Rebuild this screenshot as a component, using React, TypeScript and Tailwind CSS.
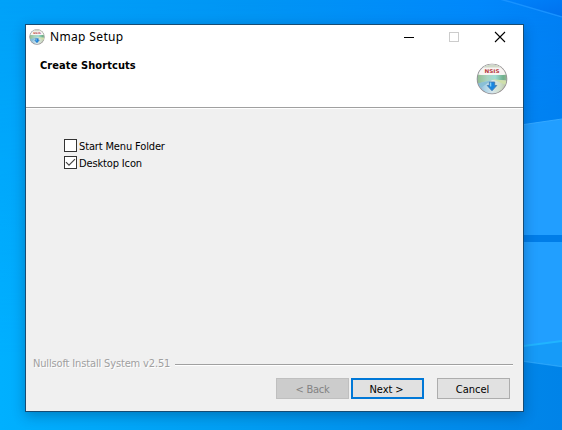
import type { ReactNode } from "react";

const UI = "font-['DejaVu_Sans_Condensed','DejaVu_Sans',sans-serif]";

function Wallpaper() {
  return (
    <svg className="absolute inset-0" width="562" height="430" viewBox="0 0 562 430" aria-hidden="true">
      <defs>
        <linearGradient id="base" x1="0" y1="0" x2="1" y2="0">
          <stop offset="0" stopColor="#00a2f9" />
          <stop offset="0.45" stopColor="#0095f4" />
          <stop offset="0.85" stopColor="#0088fb" />
          <stop offset="1" stopColor="#007ff5" />
        </linearGradient>
        <linearGradient id="low" x1="0" y1="0" x2="1" y2="0">
          <stop offset="0" stopColor="#00b0ff" />
          <stop offset="0.4" stopColor="#009ff3" />
          <stop offset="0.75" stopColor="#008eec" />
          <stop offset="1" stopColor="#0083e8" />
        </linearGradient>
        <linearGradient id="fade" x1="0" y1="0" x2="0" y2="1">
          <stop offset="0" stopColor="#fff" stopOpacity="0" />
          <stop offset="0.85" stopColor="#fff" />
        </linearGradient>
        <mask id="lower"><rect width="562" height="430" fill="url(#fade)" /></mask>
        <linearGradient id="corner" x1="0" y1="0" x2="1" y2="1">
          <stop offset="0" stopColor="#0083fb" />
          <stop offset="1" stopColor="#0070ed" />
        </linearGradient>
      </defs>
      <rect width="562" height="430" fill="url(#base)" />
      <rect width="562" height="430" fill="url(#low)" mask="url(#lower)" />
      <path d="M500 0H562V18Z" fill="url(#corner)" />
      <path d="M500 -1L562 17" stroke="#1793ff" strokeWidth="1.5" fill="none" />
      <path d="M500 128L562 119V236H500Z" fill="#219eff" />
      <path d="M500 128L562 119" stroke="#35a8ff" strokeWidth="1" />
      <rect x="500" y="235" width="62" height="7" fill="#007de8" />
      <path d="M500 242H562V341L500 349Z" fill="#219fff" />
      <path d="M500 349L562 341V366L500 357Z" fill="#169bf8" />
      <path d="M500 349L562 341" stroke="#21b4ff" strokeWidth="2" />
      <path d="M500 358L562 366.5" stroke="#27a4fa" strokeWidth="1.5" />
    </svg>
  );
}

function Disc({ size }: { size: number }) {
  const id = "d" + size;
  return (
    <svg width={size} height={size} viewBox="0 0 32 32" className="block shrink-0" aria-hidden="true">
      <defs>
        <linearGradient id={id + "a"} x1="0" y1="0" x2="1" y2="0">
          <stop offset="0" stopColor="#8fb88a" />
          <stop offset="0.35" stopColor="#a9d3c0" />
          <stop offset="0.6" stopColor="#9fdcd6" />
          <stop offset="0.85" stopColor="#6fb08c" />
          <stop offset="1" stopColor="#9db596" />
        </linearGradient>
        <linearGradient id={id + "b"} x1="0" y1="0" x2="1" y2="0">
          <stop offset="0" stopColor="#8799cb" />
          <stop offset="0.25" stopColor="#a5cfe4" />
          <stop offset="0.5" stopColor="#d5e6ec" />
          <stop offset="0.75" stopColor="#d2dfcb" />
          <stop offset="1" stopColor="#aebf9f" />
        </linearGradient>
        <clipPath id={id + "c"}><circle cx="16" cy="16" r="14.4" /></clipPath>
      </defs>
      <circle cx="16" cy="16" r="15.3" fill="#908a8e" />
      <g clipPath={"url(#" + id + "c)"}>
        <rect width="32" height="32" fill={"url(#" + id + "b)"} />
        <path d="M0 9H32V17L16 17L0 21Z" fill={"url(#" + id + "a)"} />
        <path d="M16 16L32 18V23Z" fill="#cfe0ab" />
        <path d="M0 21L16 17L2 27Z" fill="#89bfd6" />
        <path d="M0 0H32V9Q31 12 27 12H5Q1 12 0 9Z" fill="#f8f4f3" />
        <path d="M3 6Q9 0 16 1.5Q23 0 29 6L26 4.5H6Z" fill="#cfd8c8" />
      </g>
      <text x="16" y="9.6" textAnchor="middle" textLength="15" lengthAdjust="spacingAndGlyphs" fontFamily="DejaVu Sans, sans-serif" fontSize="5" fontWeight="bold" fill="#b5393c">NSIS</text>
      <path d="M13.3 19H18.7V22.5H20.8L16 27.8L11.2 22.5H13.3Z" fill="#1986e0" stroke="#4577a8" strokeWidth="0.8" />
      <path d="M14.6 19.5V23.5" stroke="#7fd0fa" strokeWidth="1.4" />
    </svg>
  );
}

function CheckRow({ label, checked }: { label: string; checked?: boolean }) {
  return (
    <label className="flex h-[17px] items-start">
      <span className="relative mr-[2px] h-[13px] w-[13px] border border-[#333] bg-white">
        <input type="checkbox" checked={!!checked} readOnly className="absolute inset-0 opacity-0" />
        {checked && (
          <svg width="11" height="11" viewBox="0 0 11 11" className="block" aria-hidden="true">
            <path d="M1 5.2L4 8.2L10 2.2" fill="none" stroke="#444" strokeWidth="1.2" />
          </svg>
        )}
      </span>
      <span className="pt-px text-[11px] leading-[14px] tracking-[-0.14px] whitespace-nowrap">{label}</span>
    </label>
  );
}

function Button({ className, children }: { className: string; children: ReactNode }) {
  return (
    <button className={"flex h-[21px] w-[73px] items-center justify-center pt-[3px] text-[11px] leading-[14px] whitespace-nowrap " + className}>
      {children}
    </button>
  );
}

export default function App() {
  return (
    <div className="relative h-[430px] w-[562px] overflow-hidden bg-[#009bf5] pt-6 pl-[25px]">
      <Wallpaper />
      <main className={"relative flex h-[388px] w-[499px] flex-col border border-[#174c74] bg-[#f0f0f0] text-black shadow-[0_4px_12px_0_rgba(0,35,75,0.32)] " + UI}>
        <header className="h-[83px] shrink-0 border-b border-[#a0a0a0] bg-white">
          <div className="flex h-[27px] items-start pt-1 pl-[3px]">
            <Disc size={16} />
            <h1 className="ml-[5px] w-[354px] font-['Noto_Sans',sans-serif] text-[12px] leading-[16px] tracking-[0.35px]">Nmap Setup</h1>
            <svg width="102" height="16" viewBox="0 0 102 16" shapeRendering="crispEdges" aria-hidden="true">
              <path d="M0 8.5H10" stroke="#000" />
              <rect x="45.5" y="3.5" width="9" height="9" fill="none" stroke="#ccc" />
              <path d="M91 3L101 13M101 3L91 13" stroke="#000" shapeRendering="auto" strokeWidth="1.1" />
            </svg>
          </div>
          <div className="flex items-start justify-between pr-[15px] pl-[14px]">
            <h2 className="pt-[7px] text-[11px] leading-[14px] font-bold tracking-[0.08px]">Create Shortcuts</h2>
            <div className="pt-[11px]"><Disc size={32} /></div>
          </div>
        </header>
        <section className="h-[247px] border-t border-white pt-[30px] pl-[38px]">
          <CheckRow label="Start Menu Folder" />
          <CheckRow label="Desktop Icon" checked />
        </section>
        <footer>
          <div className="flex h-[16px] items-center pr-[10px] pl-[7px]">
            <span className="w-[142px] pt-px text-[11px] leading-[14px] tracking-[-0.15px] whitespace-nowrap text-[#a0a0a0] [text-shadow:1px_1px_0_white]">Nullsoft Install System v2.51</span>
            <div className="mt-[3px] h-[2px] grow border-t border-[#a0a0a0] bg-white" />
          </div>
          <div className="mt-[7px] flex justify-end pr-[13px]">
            <Button className="border border-[#bfbfbf] bg-[#ccc] tracking-[-0.25px] text-[#838383]">&lt; Back</Button>
            <Button className="ml-[2px] border-2 border-[#0078d7] bg-[#e1e1e1] pr-[2px] tracking-[-0.1px]">Next &gt;</Button>
            <Button className="ml-[13px] border border-[#adadad] bg-[#e1e1e1] pr-[2px]">Cancel</Button>
          </div>
        </footer>
      </main>
    </div>
  );
}
